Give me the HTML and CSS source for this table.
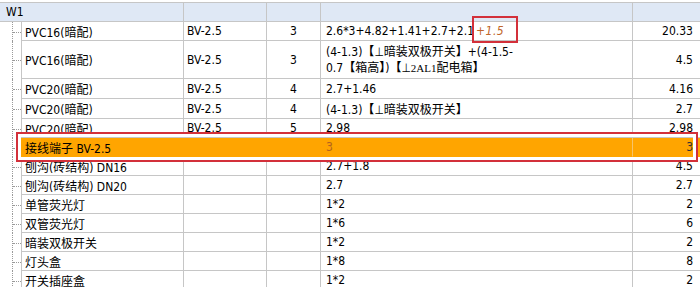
FILE: index.html
```html
<!DOCTYPE html>
<html lang="zh-CN">
<head>
<meta charset="utf-8">
<title>W1</title>
<link rel="stylesheet" href="styles.css">
</head>
<body>
<div class="sheet">
  <div class="row group">
    <div class="c name-head">W1</div>
    <div class="c"></div>
    <div class="c"></div>
    <div class="c"></div>
    <div class="c last"></div>
  </div>

  <div class="row h19">
    <div class="tree"></div>
    <div class="c c1">PVC16(暗配)</div>
    <div class="c">BV-2.5</div>
    <div class="c qty">3</div>
    <div class="c expr"><span>2.6*3+4.82+1.41+2.7+2.1<span class="added">+1.5</span></span></div>
    <div class="c num last">20.33</div>
  </div>

  <div class="row h38">
    <div class="tree"></div>
    <div class="c c1">PVC16(暗配)</div>
    <div class="c">BV-2.5</div>
    <div class="c qty">3</div>
    <div class="c expr multi"><span class="lines">(4-1.3)<b class="br">【</b>⊥暗装双极开关<b class="br">】</b>+(4-1.5-<br>0.7<b class="br">【</b>箱高<b class="br">】</b>)<b class="br">【</b>⊥<span class="small">2AL1</span>配电箱<b class="br">】</b></span></div>
    <div class="c num last">4.5</div>
  </div>

  <div class="row h20">
    <div class="tree"></div>
    <div class="c c1">PVC20(暗配)</div>
    <div class="c">BV-2.5</div>
    <div class="c qty">4</div>
    <div class="c expr">2.7+1.46</div>
    <div class="c num last">4.16</div>
  </div>

  <div class="row h20">
    <div class="tree"></div>
    <div class="c c1">PVC20(暗配)</div>
    <div class="c">BV-2.5</div>
    <div class="c qty">4</div>
    <div class="c expr"><span>(4-1.3)<b class="br">【</b>⊥暗装双极开关<b class="br">】</b></span></div>
    <div class="c num last">2.7</div>
  </div>

  <div class="row h19">
    <div class="tree"></div>
    <div class="c c1">PVC20(暗配)</div>
    <div class="c">BV-2.5</div>
    <div class="c qty">5</div>
    <div class="c expr">2.98</div>
    <div class="c num last">2.98</div>
  </div>

  <div class="row h19 selected">
    <div class="tree"></div>
    <div class="c c1">接线端子 BV-2.5</div>
    <div class="c"></div>
    <div class="c"></div>
    <div class="c expr sel-expr">3</div>
    <div class="c num last">3</div>
  </div>

  <div class="row h19">
    <div class="tree"></div>
    <div class="c c1">刨沟(砖结构) DN16</div>
    <div class="c"></div>
    <div class="c"></div>
    <div class="c expr">2.7+1.8</div>
    <div class="c num last">4.5</div>
  </div>

  <div class="row h19">
    <div class="tree"></div>
    <div class="c c1">刨沟(砖结构) DN20</div>
    <div class="c"></div>
    <div class="c"></div>
    <div class="c expr">2.7</div>
    <div class="c num last">2.7</div>
  </div>

  <div class="row h19">
    <div class="tree"></div>
    <div class="c c1">单管荧光灯</div>
    <div class="c"></div>
    <div class="c"></div>
    <div class="c expr">1*2</div>
    <div class="c num last">2</div>
  </div>

  <div class="row h19">
    <div class="tree"></div>
    <div class="c c1">双管荧光灯</div>
    <div class="c"></div>
    <div class="c"></div>
    <div class="c expr">1*6</div>
    <div class="c num last">6</div>
  </div>

  <div class="row h19">
    <div class="tree"></div>
    <div class="c c1">暗装双极开关</div>
    <div class="c"></div>
    <div class="c"></div>
    <div class="c expr">1*2</div>
    <div class="c num last">2</div>
  </div>

  <div class="row h19">
    <div class="tree"></div>
    <div class="c c1">灯头盒</div>
    <div class="c"></div>
    <div class="c"></div>
    <div class="c expr">1*8</div>
    <div class="c num last">8</div>
  </div>

  <div class="row h19">
    <div class="tree"></div>
    <div class="c c1">开关插座盒</div>
    <div class="c"></div>
    <div class="c"></div>
    <div class="c expr">1*2</div>
    <div class="c num last">2</div>
  </div>

  <div class="mark mark-row"></div>
  <div class="mark mark-cell"></div>
</div>
</body>
</html>
```

FILE: styles.css
```css
html, body {
  margin: 0;
  padding: 0;
  background: #fff;
}

body {
  width: 700px;
  height: 287px;
  overflow: hidden;
}

.sheet {
  position: relative;
  margin-top: 2px;
  font-family: "DejaVu Sans Condensed", "DejaVu Sans", "Noto Sans CJK SC", sans-serif;
  font-stretch: condensed;
  font-size: 12px;
  color: #000;
}

.row {
  display: grid;
  grid-template-columns: 21px 163px 83px 54px 312px 67px;
}

.h19 { height: 19px; }
.h20 { height: 20px; }
.h38 { height: 38px; }

.c {
  box-sizing: border-box;
  border-right: 1px solid #c6c6c6;
  border-bottom: 1px solid #c6c6c6;
  display: flex;
  align-items: center;
  padding: 0 3px;
  white-space: nowrap;
  overflow: hidden;
}

.c.last {
  border-right: none;
}

.c1 {
  border-left: 1px solid #c6c6c6;
}

.group {
  height: 20px;
  background: #dfe8f5;
  border-top: 1px solid #c6c6c6;
  box-sizing: border-box;
}

.group .c {
  height: 19px;
}

.name-head {
  grid-column: span 2;
  padding-left: 6px;
}

.qty {
  justify-content: center;
}

.expr {
  padding-left: 5px;
}

.lines {
  display: block;
  line-height: 16px;
}

.num {
  justify-content: flex-end;
  padding-right: 7px;
}

.added {
  font-style: italic;
  color: #c0652b;
  margin-left: 2px;
  letter-spacing: 0.5px;
}

.br {
  font-weight: bold;
}

.small {
  font-family: "Liberation Serif", serif;
  font-size: 11px;
}

.tree {
  position: relative;
}

.tree::before {
  content: "";
  position: absolute;
  left: 12px;
  top: 0;
  bottom: 0;
  border-left: 1px dotted #9a9a9a;
}

.tree::after {
  content: "";
  position: absolute;
  left: 13px;
  width: 8px;
  top: 50%;
  border-top: 1px dotted #9a9a9a;
}

.selected .c {
  background: #ffa500;
  border-color: #ffa500;
}

.selected .sel-expr {
  color: #b4641e;
  border-right-color: #f7c46a;
}

.selected .num {
  color: #333;
}

.mark {
  position: absolute;
  box-sizing: border-box;
  border: 2px solid #d3303a;
  pointer-events: none;
}

.mark-row {
  left: 16px;
  top: 130px;
  width: 682px;
  height: 30px;
  box-shadow: inset 0 0 0 3px #fff;
}

.mark-cell {
  left: 472px;
  top: 14px;
  width: 46px;
  height: 27px;
}
```
